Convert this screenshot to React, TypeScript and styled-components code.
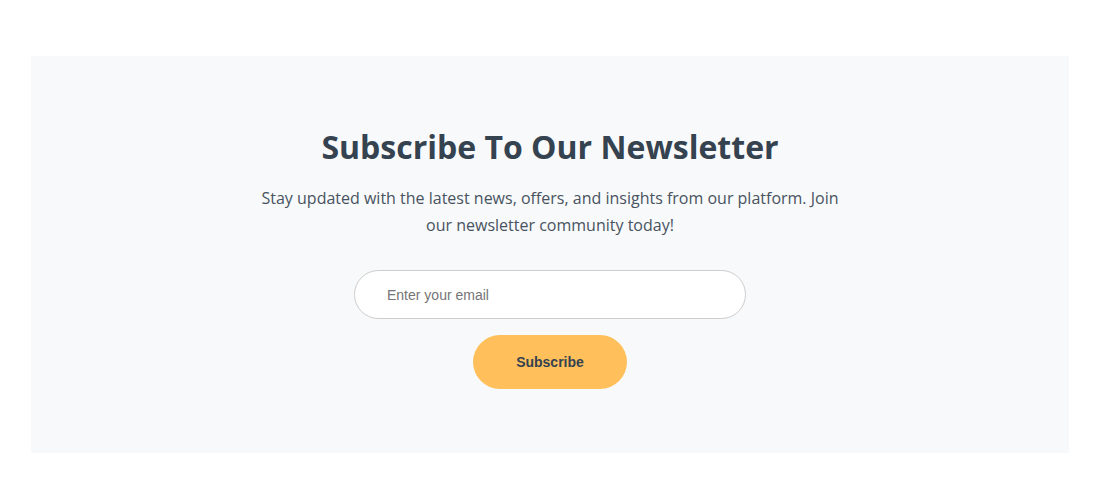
import React from "react";
import styled, { createGlobalStyle } from "styled-components";

const GlobalStyle = createGlobalStyle`
    html, body {
        margin: 0;
        padding: 0;
        background: #ffffff;
    }
`;

export default function App() {
    return (
        <Page>
            <GlobalStyle />
            <Section>
                <Title>Subscribe To Our Newsletter</Title>
                <Lead>
                    Stay updated with the latest news, offers, and insights from our platform. Join our newsletter
                    community today!
                </Lead>
                <Form onSubmit={e => e.preventDefault()}>
                    <EmailInput type="email" placeholder="Enter your email" />
                    <SubscribeButton type="submit">Subscribe</SubscribeButton>
                </Form>
            </Section>
        </Page>
    );
}

const Page = styled.div`
    padding: 56px 24px 51px 31px;
`;

const Section = styled.section`
    background-color: #f8f9fa;
    height: 397px;
    box-sizing: border-box;
    padding-top: 69px;
    display: flex;
    flex-direction: column;
    align-items: center;
`;

const Title = styled.h2`
    margin: 0;
    font-family: "Open Sans", sans-serif;
    font-weight: 700;
    font-size: 32px;
    line-height: 44px;
    color: #35424f;
`;

const Lead = styled.p`
    margin: 16px 0 0;
    max-width: 600px;
    text-align: center;
    font-family: "Open Sans", sans-serif;
    font-size: 16px;
    line-height: 27px;
    color: #485361;
`;

const Form = styled.form`
    margin-top: 31px;
    display: flex;
    flex-direction: column;
    align-items: center;
    gap: 16px;
`;

const EmailInput = styled.input`
    width: 392px;
    height: 49px;
    box-sizing: border-box;
    padding: 0 32px;
    border: 1px solid #cccccc;
    border-radius: 25px;
    background: #ffffff;
    font-family: "Liberation Sans", Arial, sans-serif;
    font-size: 14px;
    color: #333;
    outline: none;

    &::placeholder {
        color: #757575;
    }
`;

const SubscribeButton = styled.button`
    width: 154px;
    height: 54px;
    border: none;
    border-radius: 27px;
    background-color: #ffc05c;
    font-family: "Liberation Sans", Arial, sans-serif;
    font-weight: 700;
    font-size: 14px;
    color: #35424f;
    cursor: pointer;
`;
